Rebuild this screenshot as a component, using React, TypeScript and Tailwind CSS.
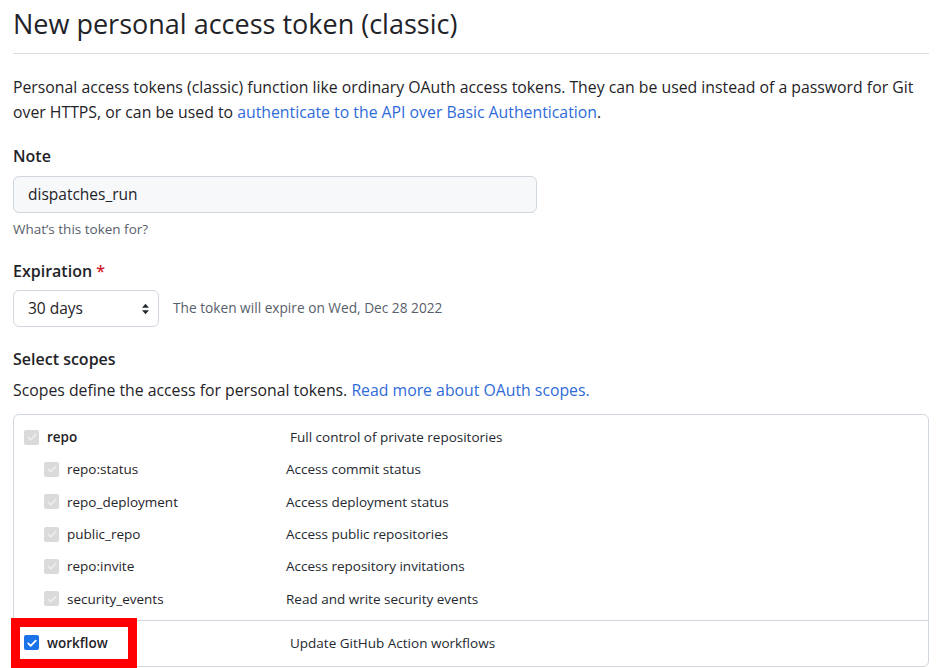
import React from "react";

const font = { fontFamily: '"Open Sans", "Noto Sans", Arial, sans-serif' };

type Scope = { name: string; desc: string; sub?: boolean; checked?: boolean };

const repoScopes: Scope[] = [
  { name: "repo", desc: "Full control of private repositories" },
  { name: "repo:status", desc: "Access commit status", sub: true },
  { name: "repo_deployment", desc: "Access deployment status", sub: true },
  { name: "public_repo", desc: "Access public repositories", sub: true },
  { name: "repo:invite", desc: "Access repository invitations", sub: true },
  { name: "security_events", desc: "Read and write security events", sub: true },
];

function Check({ on }: { on?: boolean }) {
  return (
    <span
      className={
        "inline-flex items-center justify-center w-[15px] h-[15px] rounded-[2px] shrink-0 " +
        (on ? "bg-[#1a73e8]" : "bg-[#dadada]")
      }
    >
      <svg viewBox="0 0 16 16" className="w-[12px] h-[12px]">
        <path
          d="M3 8.5l3.2 3.2L13 4.8"
          fill="none"
          stroke={on ? "#ffffff" : "#eeeeee"}
          strokeWidth={on ? 2.4 : 2}
          strokeLinecap="round"
          strokeLinejoin="round"
        />
      </svg>
    </span>
  );
}

export default function App() {
  return (
    <div className="min-h-screen bg-white text-[#1f2328] overflow-hidden" style={font}>
      <div className="pl-[13px] pr-[11px]">
        <div className="pt-[4px] pb-[9px] border-b border-[#d8dee4]">
          <h1 className="text-[27px] leading-[40px] font-normal">New personal access token (classic)</h1>
        </div>

        <p className="mt-[21px] text-[15.8px] leading-[25px]">
          Personal access tokens (classic) function like ordinary OAuth access tokens. They can be used instead of a password for Git
          over HTTPS, or can be used to <a className="text-[#2f6bd9]">authenticate to the API over Basic Authentication</a>.
        </p>

        <div className="mt-[20px]">
          <div className="text-[16px] font-semibold leading-[22px]">Note</div>
          <div className="mt-[9px] w-[524px] h-[37px] rounded-[6px] border border-[#d0d7de] bg-[#f6f8fa] flex items-center px-[14px] text-[15.5px]">
            dispatches_run
          </div>
          <div className="mt-[7px] text-[13.5px] text-[#57606a] leading-[18px]">What’s this token for?</div>
        </div>

        <div className="mt-[22px]">
          <div className="text-[16px] font-semibold leading-[22px]">
            Expiration <span className="text-[#cf222e]">*</span>
          </div>
          <div className="mt-[8px] flex items-center gap-[14px]">
            <div className="w-[146px] h-[37px] rounded-[6px] border border-[#d0d7de] bg-white flex items-center justify-between pl-[14px] pr-[8px] text-[15.5px]">
              <span>30 days</span>
              <svg viewBox="0 0 10 14" className="w-[9px] h-[12px]">
                <path d="M5 1L9 5.5H1z" fill="#24292f" />
                <path d="M5 13L1 8.5h8z" fill="#24292f" />
              </svg>
            </div>
            <span className="text-[13.7px] text-[#57606a]">The token will expire on Wed, Dec 28 2022</span>
          </div>
        </div>

        <div className="mt-[21px]">
          <div className="text-[16px] font-semibold leading-[22px]">Select scopes</div>
          <p className="mt-[9px] text-[15.8px] leading-[22px]">
            Scopes define the access for personal tokens. <a className="text-[#2f6bd9]">Read more about OAuth scopes.</a>
          </p>
        </div>

        <div className="mt-[13px] border border-[#d0d7de] rounded-[6px]">
          <div className="pt-[6px] pb-[5px] border-b border-[#d0d7de]">
            {repoScopes.map((s) => (
              <div key={s.name} className="h-[32.3px] flex items-center">
                {s.sub ? (
                  <>
                    <div className="w-[272px] flex items-center pl-[30px]">
                      <Check />
                      <span className="ml-[8px] text-[13.5px]">{s.name}</span>
                    </div>
                    <span className="text-[13.5px] text-[#24292f]">{s.desc}</span>
                  </>
                ) : (
                  <>
                    <div className="w-[276px] flex items-center pl-[10px]">
                      <Check />
                      <span className="ml-[8px] text-[13.5px] font-semibold">{s.name}</span>
                    </div>
                    <span className="text-[13.5px] text-[#24292f]">{s.desc}</span>
                  </>
                )}
              </div>
            ))}
          </div>
          <div className="pt-[6px] pb-[7px]">
            <div className="h-[32px] flex items-center">
              <div className="w-[276px] flex items-center pl-[10px]">
                <span className="relative flex items-center">
                  <span className="absolute left-[-13px] top-[-15px] w-[126px] h-[50px] border-[9px] border-[#ff0000]" />
                  <Check on />
                  <span className="ml-[8px] text-[13.5px] font-semibold">workflow</span>
                </span>
              </div>
              <span className="text-[13.5px] text-[#24292f]">Update GitHub Action workflows</span>
            </div>
          </div>
        </div>
      </div>
    </div>
  );
}
